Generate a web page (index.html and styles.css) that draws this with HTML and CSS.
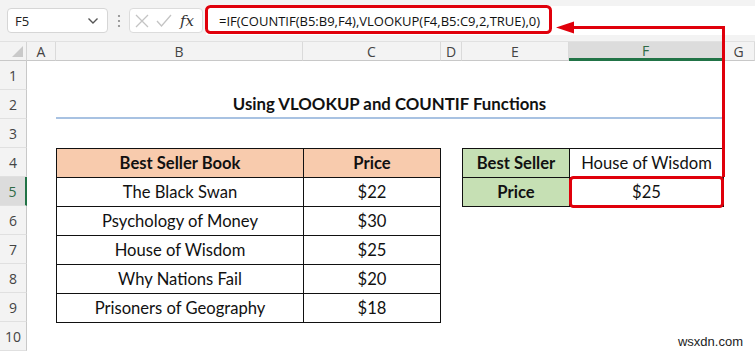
FILE: index.html
```html
<!DOCTYPE html>
<html lang="en">
<head>
  <meta charset="UTF-8">
  <meta name="viewport" content="width=device-width, initial-scale=1.0">
  <title>VLOOKUP and COUNTIF</title>
  <link rel="stylesheet" href="styles.css">
</head>
<body>
  <div class="toolbar">
    <div class="namebox">
      <span>F5</span>
      <svg class="chev" width="12" height="8" viewBox="0 0 12 8"><path d="M1.5 1.5 L6 6 L10.5 1.5" fill="none" stroke="#555" stroke-width="1.4"/></svg>
    </div>
    <svg class="dots" width="4" height="14" viewBox="0 0 4 14"><circle cx="2" cy="2" r="1.1" fill="#888"/><circle cx="2" cy="7" r="1.1" fill="#888"/><circle cx="2" cy="12" r="1.1" fill="#888"/></svg>
    <div class="fxbox">
      <svg width="14" height="14" viewBox="0 0 14 14"><path d="M1 1 L13 13 M13 1 L1 13" stroke="#c4c4c4" stroke-width="1.3"/></svg>
      <svg width="16" height="14" viewBox="0 0 16 14"><path d="M1 7 L5.5 12 L15 1" fill="none" stroke="#c4c4c4" stroke-width="1.3"/></svg>
      <span class="fx">fx</span>
    </div>
    <div class="formula">=IF(COUNTIF(B5:B9,F4),VLOOKUP(F4,B5:C9,2,TRUE),0)</div>
  </div>

  <div class="sheet">
    <div class="corner"><span class="tri"></span></div>
    <div class="colhead">A</div>
    <div class="colhead">B</div>
    <div class="colhead">C</div>
    <div class="colhead">D</div>
    <div class="colhead">E</div>
    <div class="colhead active">F</div>
    <div class="colhead">G</div>

    <div class="rowhead r1">1</div>
    <div class="rowhead r2">2</div>
    <div class="rowhead r3">3</div>
    <div class="rowhead r4">4</div>
    <div class="rowhead r5 active">5</div>
    <div class="rowhead r6">6</div>
    <div class="rowhead r7">7</div>
    <div class="rowhead r8">8</div>
    <div class="rowhead r9">9</div>
    <div class="rowhead r10">10</div>

    <div class="title">Using VLOOKUP and COUNTIF Functions</div>

    <table class="books">
      <tr><th>Best Seller Book</th><th>Price</th></tr>
      <tr><td>The Black Swan</td><td>$22</td></tr>
      <tr><td>Psychology of Money</td><td>$30</td></tr>
      <tr><td>House of Wisdom</td><td>$25</td></tr>
      <tr><td>Why Nations Fail</td><td>$20</td></tr>
      <tr><td>Prisoners of Geography</td><td>$18</td></tr>
    </table>

    <table class="result">
      <tr><th>Best Seller</th><td>House of Wisdom</td></tr>
      <tr><th>Price</th><td>$25</td></tr>
    </table>
  </div>

  <svg class="marks" width="755" height="352" viewBox="0 0 755 352">
    <rect x="206.5" y="6.5" width="344" height="26" rx="4" fill="none" stroke="#e0000b" stroke-width="3"/>
    <rect x="570.5" y="177.5" width="152" height="29" rx="3" fill="none" stroke="#e0000b" stroke-width="3"/>
    <path d="M723.5 177 L723.5 27.5 L570 27.5" fill="none" stroke="#e0000b" stroke-width="3"/>
    <path d="M556 27.5 L574 21.5 L574 33.5 Z" fill="#e0000b"/>
  </svg>

  <div class="mark">wsxdn.com</div>
</body>
</html>
```

FILE: styles.css
```css
* {
  box-sizing: border-box;
}

body {
  margin: 0;
  width: 755px;
  height: 352px;
  overflow: hidden;
  position: relative;
  background: #fff;
  font-family: "Open Sans", "Noto Sans", sans-serif;
  color: #222;
}

.toolbar {
  height: 42px;
  background: #f3f3f3;
  display: flex;
  align-items: center;
  padding-left: 7px;
  border-bottom: 1px solid #e1e1e1;
}

.namebox {
  width: 101px;
  height: 25px;
  background: #fff;
  border: 1px solid #d6d6d6;
  border-radius: 4px;
  display: flex;
  align-items: center;
  justify-content: space-between;
  padding: 0 8px 0 7px;
  font-size: 13px;
  color: #222;
}

.dots {
  margin: 0 8px 0 9px;
}

.fxbox {
  width: 74px;
  height: 25px;
  background: #fff;
  border: 1px solid #dcdcdc;
  border-radius: 4px;
  display: flex;
  align-items: center;
  gap: 7px;
  padding-left: 5px;
}

.fx {
  font-family: "DejaVu Serif", "Liberation Serif", serif;
  font-style: italic;
  font-size: 15px;
  color: #333;
  margin-left: 1px;
}

.formula {
  flex: 1;
  height: 29px;
  margin-left: 3px;
  background: #fff;
  display: flex;
  align-items: center;
  padding-left: 13px;
  font-size: 13px;
  color: #111;
}

.sheet {
  display: grid;
  grid-template-columns: 27px 29px 247px 138px 21px 107px 154px 1fr;
  grid-template-rows: 19px repeat(10, 29px);
  font-family: "Lato", "Open Sans", sans-serif;
}

.corner {
  background: #f3f3f3;
  border-right: 1px solid #d4d4d4;
  border-bottom: 1px solid #c8c8c8;
  position: relative;
}

.tri {
  position: absolute;
  right: 3px;
  bottom: 3px;
  width: 0;
  height: 0;
  border-left: 11px solid transparent;
  border-bottom: 11px solid #c9c9c9;
}

.colhead {
  background: #f3f3f3;
  border-right: 1px solid #dadada;
  border-bottom: 1px solid #c8c8c8;
  font-family: "Open Sans", "Noto Sans", sans-serif;
  font-size: 14px;
  color: #444;
  display: flex;
  align-items: center;
  justify-content: center;
}

.colhead.active {
  background: #dcdcdc;
  color: #2e6b46;
  border-bottom: 3px solid #217346;
}

.rowhead {
  grid-column: 1;
  background: #f3f3f3;
  border-right: 1px solid #c8c8c8;
  border-bottom: 1px solid #e0e0e0;
  font-family: "Open Sans", "Noto Sans", sans-serif;
  font-size: 14px;
  color: #444;
  display: flex;
  align-items: center;
  justify-content: center;
}

.rowhead.active {
  background: #dcdcdc;
  color: #2e6b46;
  border-right: 2px solid #217346;
}

.r1 { grid-row: 2; }
.r2 { grid-row: 3; }
.r3 { grid-row: 4; }
.r4 { grid-row: 5; }
.r5 { grid-row: 6; }
.r6 { grid-row: 7; }
.r7 { grid-row: 8; }
.r8 { grid-row: 9; }
.r9 { grid-row: 10; }
.r10 { grid-row: 11; }

.title {
  grid-column: 3 / 8;
  grid-row: 3;
  border-bottom: 2px solid #a8c2e2;
  display: flex;
  align-items: center;
  justify-content: center;
  font-weight: bold;
  font-size: 16.8px;
  color: #111;
}

table {
  border-collapse: collapse;
  font-size: 16.6px;
  color: #111;
}

th, td {
  border: 1px solid #111;
  height: 29px;
  padding: 0;
  text-align: center;
}

th {
  font-weight: bold;
}

.books {
  grid-column: 3 / 5;
  grid-row: 5 / 11;
  align-self: start;
  width: 385px;
}

.books th {
  background: #f8cbad;
}

.books td:first-child,
.books th:first-child {
  width: 247px;
}

.result {
  grid-column: 6 / 8;
  grid-row: 5 / 7;
  align-self: start;
  width: 262px;
}

.result th {
  background: #c6e0b4;
  width: 107px;
}

.marks {
  position: absolute;
  left: 0;
  top: 0;
  pointer-events: none;
}

.mark {
  position: absolute;
  right: 12px;
  bottom: 3px;
  font-family: "Liberation Sans", Arial, sans-serif;
  font-size: 13px;
  color: #222;
}
```
